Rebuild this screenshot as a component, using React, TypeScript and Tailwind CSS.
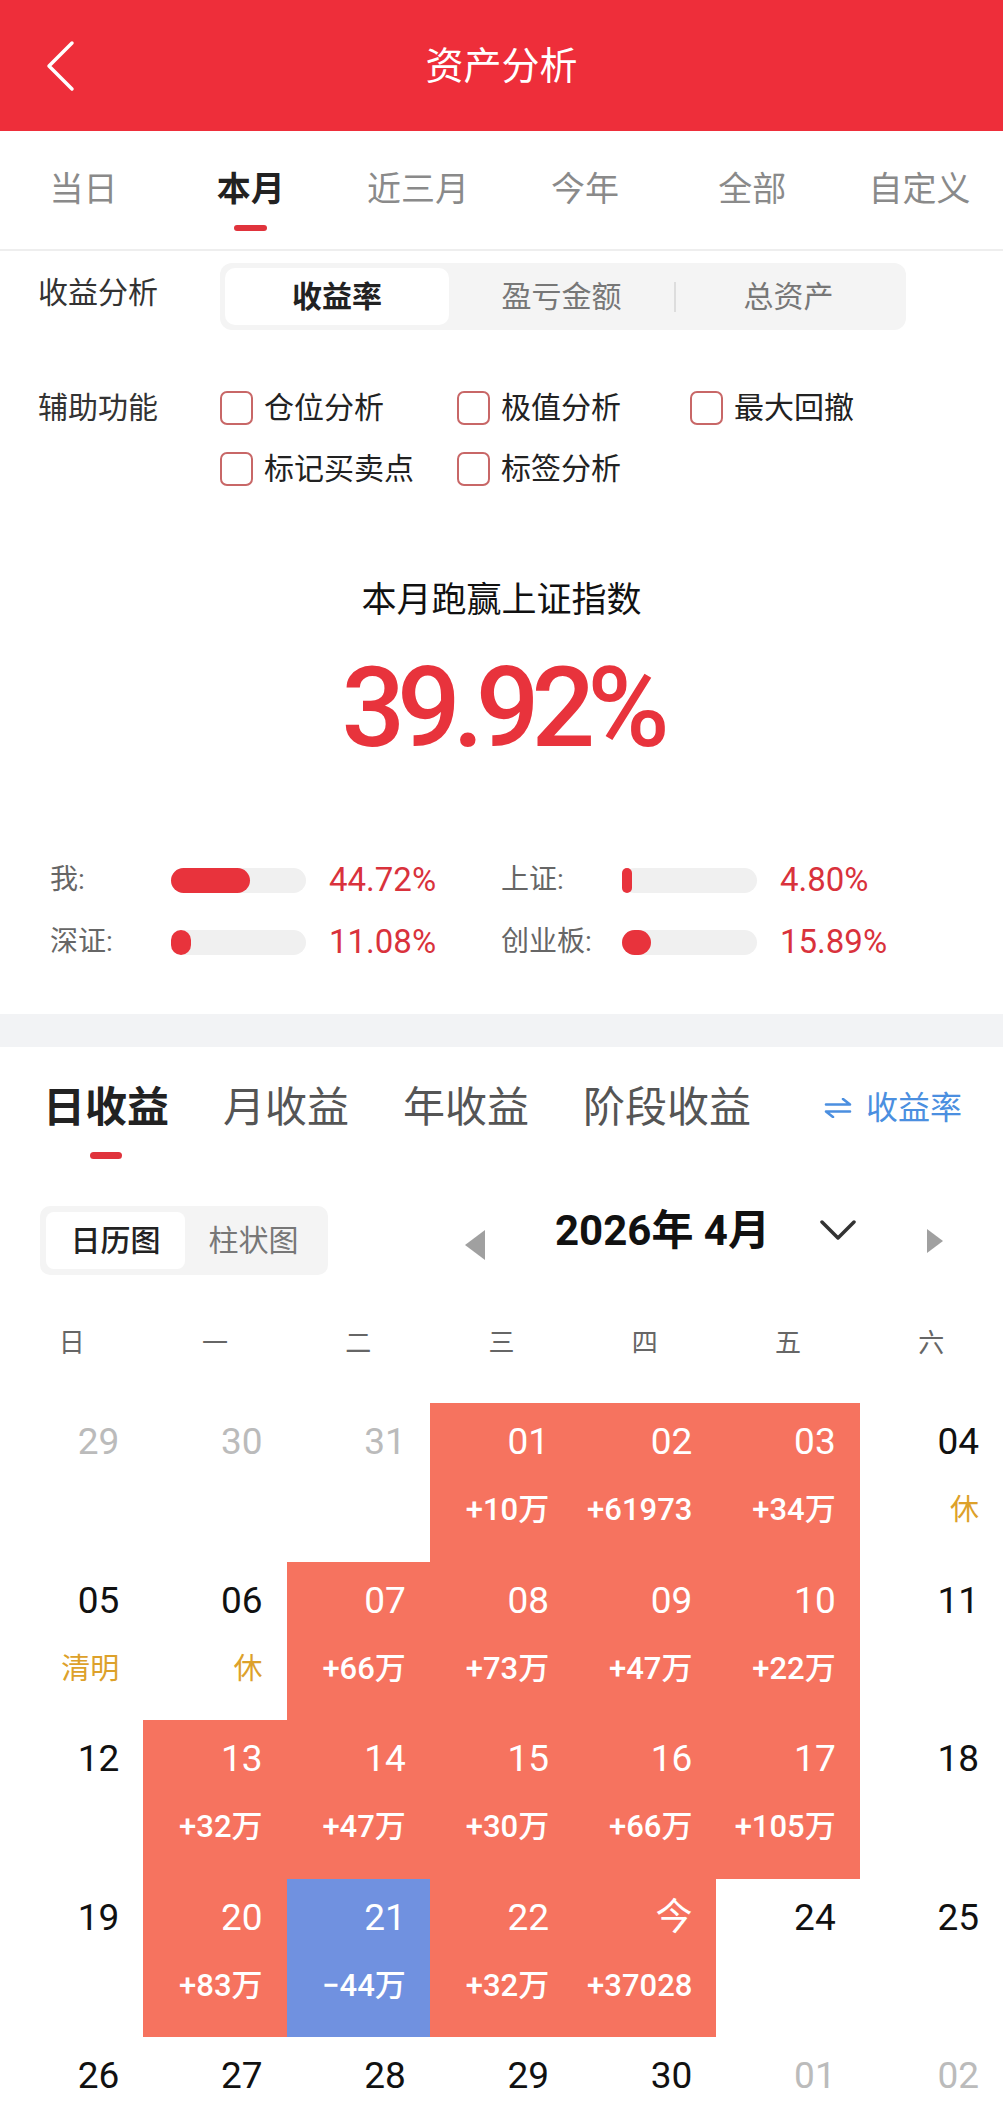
import React from "react";

type Cell = { d: string; kind: "gray" | "black" | "red" | "blue"; sub?: string; hol?: string };

const rows: Cell[][] = [
  [
    { d: "29", kind: "gray" },
    { d: "30", kind: "gray" },
    { d: "31", kind: "gray" },
    { d: "01", kind: "red", sub: "+10万" },
    { d: "02", kind: "red", sub: "+61973" },
    { d: "03", kind: "red", sub: "+34万" },
    { d: "04", kind: "black", hol: "休" },
  ],
  [
    { d: "05", kind: "black", hol: "清明" },
    { d: "06", kind: "black", hol: "休" },
    { d: "07", kind: "red", sub: "+66万" },
    { d: "08", kind: "red", sub: "+73万" },
    { d: "09", kind: "red", sub: "+47万" },
    { d: "10", kind: "red", sub: "+22万" },
    { d: "11", kind: "black" },
  ],
  [
    { d: "12", kind: "black" },
    { d: "13", kind: "red", sub: "+32万" },
    { d: "14", kind: "red", sub: "+47万" },
    { d: "15", kind: "red", sub: "+30万" },
    { d: "16", kind: "red", sub: "+66万" },
    { d: "17", kind: "red", sub: "+105万" },
    { d: "18", kind: "black" },
  ],
  [
    { d: "19", kind: "black" },
    { d: "20", kind: "red", sub: "+83万" },
    { d: "21", kind: "blue", sub: "−44万" },
    { d: "22", kind: "red", sub: "+32万" },
    { d: "今", kind: "red", sub: "+37028" },
    { d: "24", kind: "black" },
    { d: "25", kind: "black" },
  ],
  [
    { d: "26", kind: "black" },
    { d: "27", kind: "black" },
    { d: "28", kind: "black" },
    { d: "29", kind: "black" },
    { d: "30", kind: "black" },
    { d: "01", kind: "gray" },
    { d: "02", kind: "gray" },
  ],
];

const topTabs = ["当日", "本月", "近三月", "今年", "全部", "自定义"];

function Check({ label }: { label: string }) {
  return (
    <div className="flex items-center gap-[11px]">
      <div className="w-[33px] h-[34px] rounded-[7px] border-2 border-[#C86767]" />
      <span className="text-[30px] leading-[40px] text-[#222]">{label}</span>
    </div>
  );
}

function Stat({ label, fill, value }: { label: string; fill: number; value: string }) {
  return (
    <div className="flex items-center h-[40px]">
      <span className="w-[121px] text-[28px] leading-[40px] text-[#666]">{label}</span>
      <div className="w-[135px] h-[25px] rounded-full bg-[#F0F0F0] flex">
        <div className="h-full rounded-full bg-[#E8333C]" style={{ width: fill }} />
      </div>
      <span className="ml-[23px] text-[33px] leading-[40px] text-[#D9323C]">{value}</span>
    </div>
  );
}

function CalCell({ c }: { c: Cell }) {
  const bg = c.kind === "red" ? "bg-[#F6735F]" : c.kind === "blue" ? "bg-[#7091E0]" : "bg-white";
  const col =
    c.kind === "gray" ? "text-[#BBBBBB]" : c.kind === "black" ? "text-[#111111]" : "text-white";
  return (
    <div className={`h-[158.5px] flex flex-col items-end pr-[24px] pt-[19px] ${bg}`}>
      <span className={`text-[37px] leading-[40px] ${col}`}>{c.d}</span>
      {c.sub && (
        <span className="mt-[30px] text-[31px] leading-[36px] font-medium text-white">{c.sub}</span>
      )}
      {c.hol && <span className="mt-[30px] text-[29px] leading-[36px] text-[#DDA12A]">{c.hol}</span>}
    </div>
  );
}

export default function App() {
  return (
    <div className="w-full bg-white text-[#222] font-['Roboto','Noto_Sans_CJK_SC',sans-serif]">
      {/* Header */}
      <div className="h-[131px] bg-[#EE2E3A] flex items-center">
        <div className="w-[120px] pl-[45px] flex items-center">
          <svg width="30" height="52" viewBox="0 0 30 52" fill="none">
            <polyline points="27,3 4,26 27,49" stroke="white" strokeWidth="3.5" strokeLinecap="round" strokeLinejoin="round" />
          </svg>
        </div>
        <div className="flex-1 text-center text-white text-[38px] leading-[46px]">资产分析</div>
        <div className="w-[120px]" />
      </div>

      {/* Period tabs */}
      <div className="h-[120px] grid grid-cols-6 border-b-2 border-[#EEEEEE]">
        {topTabs.map((t) => {
          const active = t === "本月";
          return (
            <div key={t} className="flex flex-col items-center pt-[38px]">
              <span className={`text-[34px] leading-[40px] ${active ? "font-bold text-[#222]" : "text-[#8A8A8A]"}`}>{t}</span>
              <div className={`mt-[16px] h-[6px] w-[33px] rounded-full ${active ? "bg-[#E0333C]" : "bg-transparent"}`} />
            </div>
          );
        })}
      </div>

      {/* 收益分析 */}
      <div className="flex items-center px-[38px] mt-[12px]">
        <span className="w-[182px] text-[30px] leading-[40px] text-[#333] -mt-[8px]">收益分析</span>
        <div className="w-[686px] h-[67px] rounded-[12px] bg-[#F4F4F4] p-[5px] flex items-center">
          <div className="w-[224px] h-full rounded-[10px] bg-white flex items-center justify-center text-[30px] font-bold text-[#222]">
            收益率
          </div>
          <div className="flex-1 text-center text-[30px] text-[#777]">盈亏金额</div>
          <div className="w-[2px] h-[30px] bg-[#DDDDDD]" />
          <div className="flex-1 text-center text-[30px] text-[#777]">总资产</div>
        </div>
      </div>

      {/* 辅助功能 */}
      <div className="flex items-start px-[38px] mt-[58px]">
        <span className="w-[182px] text-[30px] leading-[40px] text-[#333]">辅助功能</span>
        <div className="grid grid-cols-[237px_233px_auto] gap-y-[21px]">
          <Check label="仓位分析" />
          <Check label="极值分析" />
          <Check label="最大回撤" />
          <Check label="标记买卖点" />
          <Check label="标签分析" />
        </div>
      </div>

      {/* Headline */}
      <div className="mt-[90px] text-center text-[35px] leading-[44px] text-[#111]">本月跑赢上证指数</div>
      <div className="mt-[29px] text-center text-[112px] leading-[112px] font-medium tracking-[-8px] text-[#E8333C]">
        39.92%
      </div>

      {/* Stats */}
      <div className="mt-[96px] pl-[50px] grid grid-cols-[451px_1fr] gap-y-[22px]">
        <Stat label="我:" fill={79} value="44.72%" />
        <Stat label="上证:" fill={10} value="4.80%" />
        <Stat label="深证:" fill={20} value="11.08%" />
        <Stat label="创业板:" fill={29} value="15.89%" />
      </div>

      {/* band */}
      <div className="mt-[52px] h-[33px] bg-[#F2F3F5]" />

      {/* Income tabs */}
      <div className="flex items-start pl-[43px] pr-[41px] mt-[36px]">
        <div className="flex gap-[54px]">
          {["日收益", "月收益", "年收益", "阶段收益"].map((t, i) => (
            <div key={t} className="flex flex-col items-center">
              <span className={`text-[42px] leading-[50px] ${i === 0 ? "font-bold text-[#222]" : "text-[#555]"}`}>{t}</span>
              <div className={`mt-[19px] h-[7px] w-[32px] rounded-full ${i === 0 ? "bg-[#E0333C]" : "bg-transparent"}`} />
            </div>
          ))}
        </div>
        <div className="ml-auto flex items-center h-[50px] gap-[14px] text-[32px] text-[#4B8FE0]">
          <svg width="28" height="20" viewBox="0 0 28 20" fill="none">
            <path d="M2 6.5 H26 L19 1" stroke="#4B8FE0" strokeWidth="2.6" strokeLinecap="round" strokeLinejoin="round" />
            <path d="M26 13.5 H2 L9 19" stroke="#4B8FE0" strokeWidth="2.6" strokeLinecap="round" strokeLinejoin="round" />
          </svg>
          <span>收益率</span>
        </div>
      </div>

      {/* Toggle + month nav */}
      <div className="flex items-start pl-[40px] mt-[47px]">
        <div className="w-[288px] h-[69px] rounded-[10px] bg-[#F4F4F4] p-[6px] flex">
          <div className="w-[139px] h-full rounded-[8px] bg-white flex items-center justify-center text-[30px] font-medium text-[#222]">
            日历图
          </div>
          <div className="flex-1 flex items-center justify-center text-[30px] text-[#777]">柱状图</div>
        </div>
        <div className="ml-[137px] flex items-start">
          <svg className="mt-[24px]" width="20" height="30" viewBox="0 0 20 30">
            <polygon points="20,0 20,30 0,15" fill="#A0A0A0" />
          </svg>
          <div className="w-[335px] pl-[70px] text-[42px] leading-[50px] font-bold text-[#111]">2026年 4月</div>
          <svg className="mt-[13px]" width="36" height="22" viewBox="0 0 36 22" fill="none">
            <polyline points="2,3 18,19 34,3" stroke="#333" strokeWidth="3.5" strokeLinecap="round" strokeLinejoin="round" />
          </svg>
          <svg className="ml-[71px] mt-[23px]" width="16" height="24" viewBox="0 0 16 24">
            <polygon points="0,0 16,12 0,24" fill="#A0A0A0" />
          </svg>
        </div>
      </div>

      {/* Weekdays */}
      <div className="mt-[51px] grid grid-cols-7 text-center text-[26px] leading-[34px] text-[#666]">
        {["日", "一", "二", "三", "四", "五", "六"].map((w) => (
          <span key={w}>{w}</span>
        ))}
      </div>

      {/* Calendar */}
      <div className="mt-[43px] grid grid-cols-7">
        {rows.flat().map((c, i) => (
          <CalCell key={i} c={c} />
        ))}
      </div>
    </div>
  );
}
